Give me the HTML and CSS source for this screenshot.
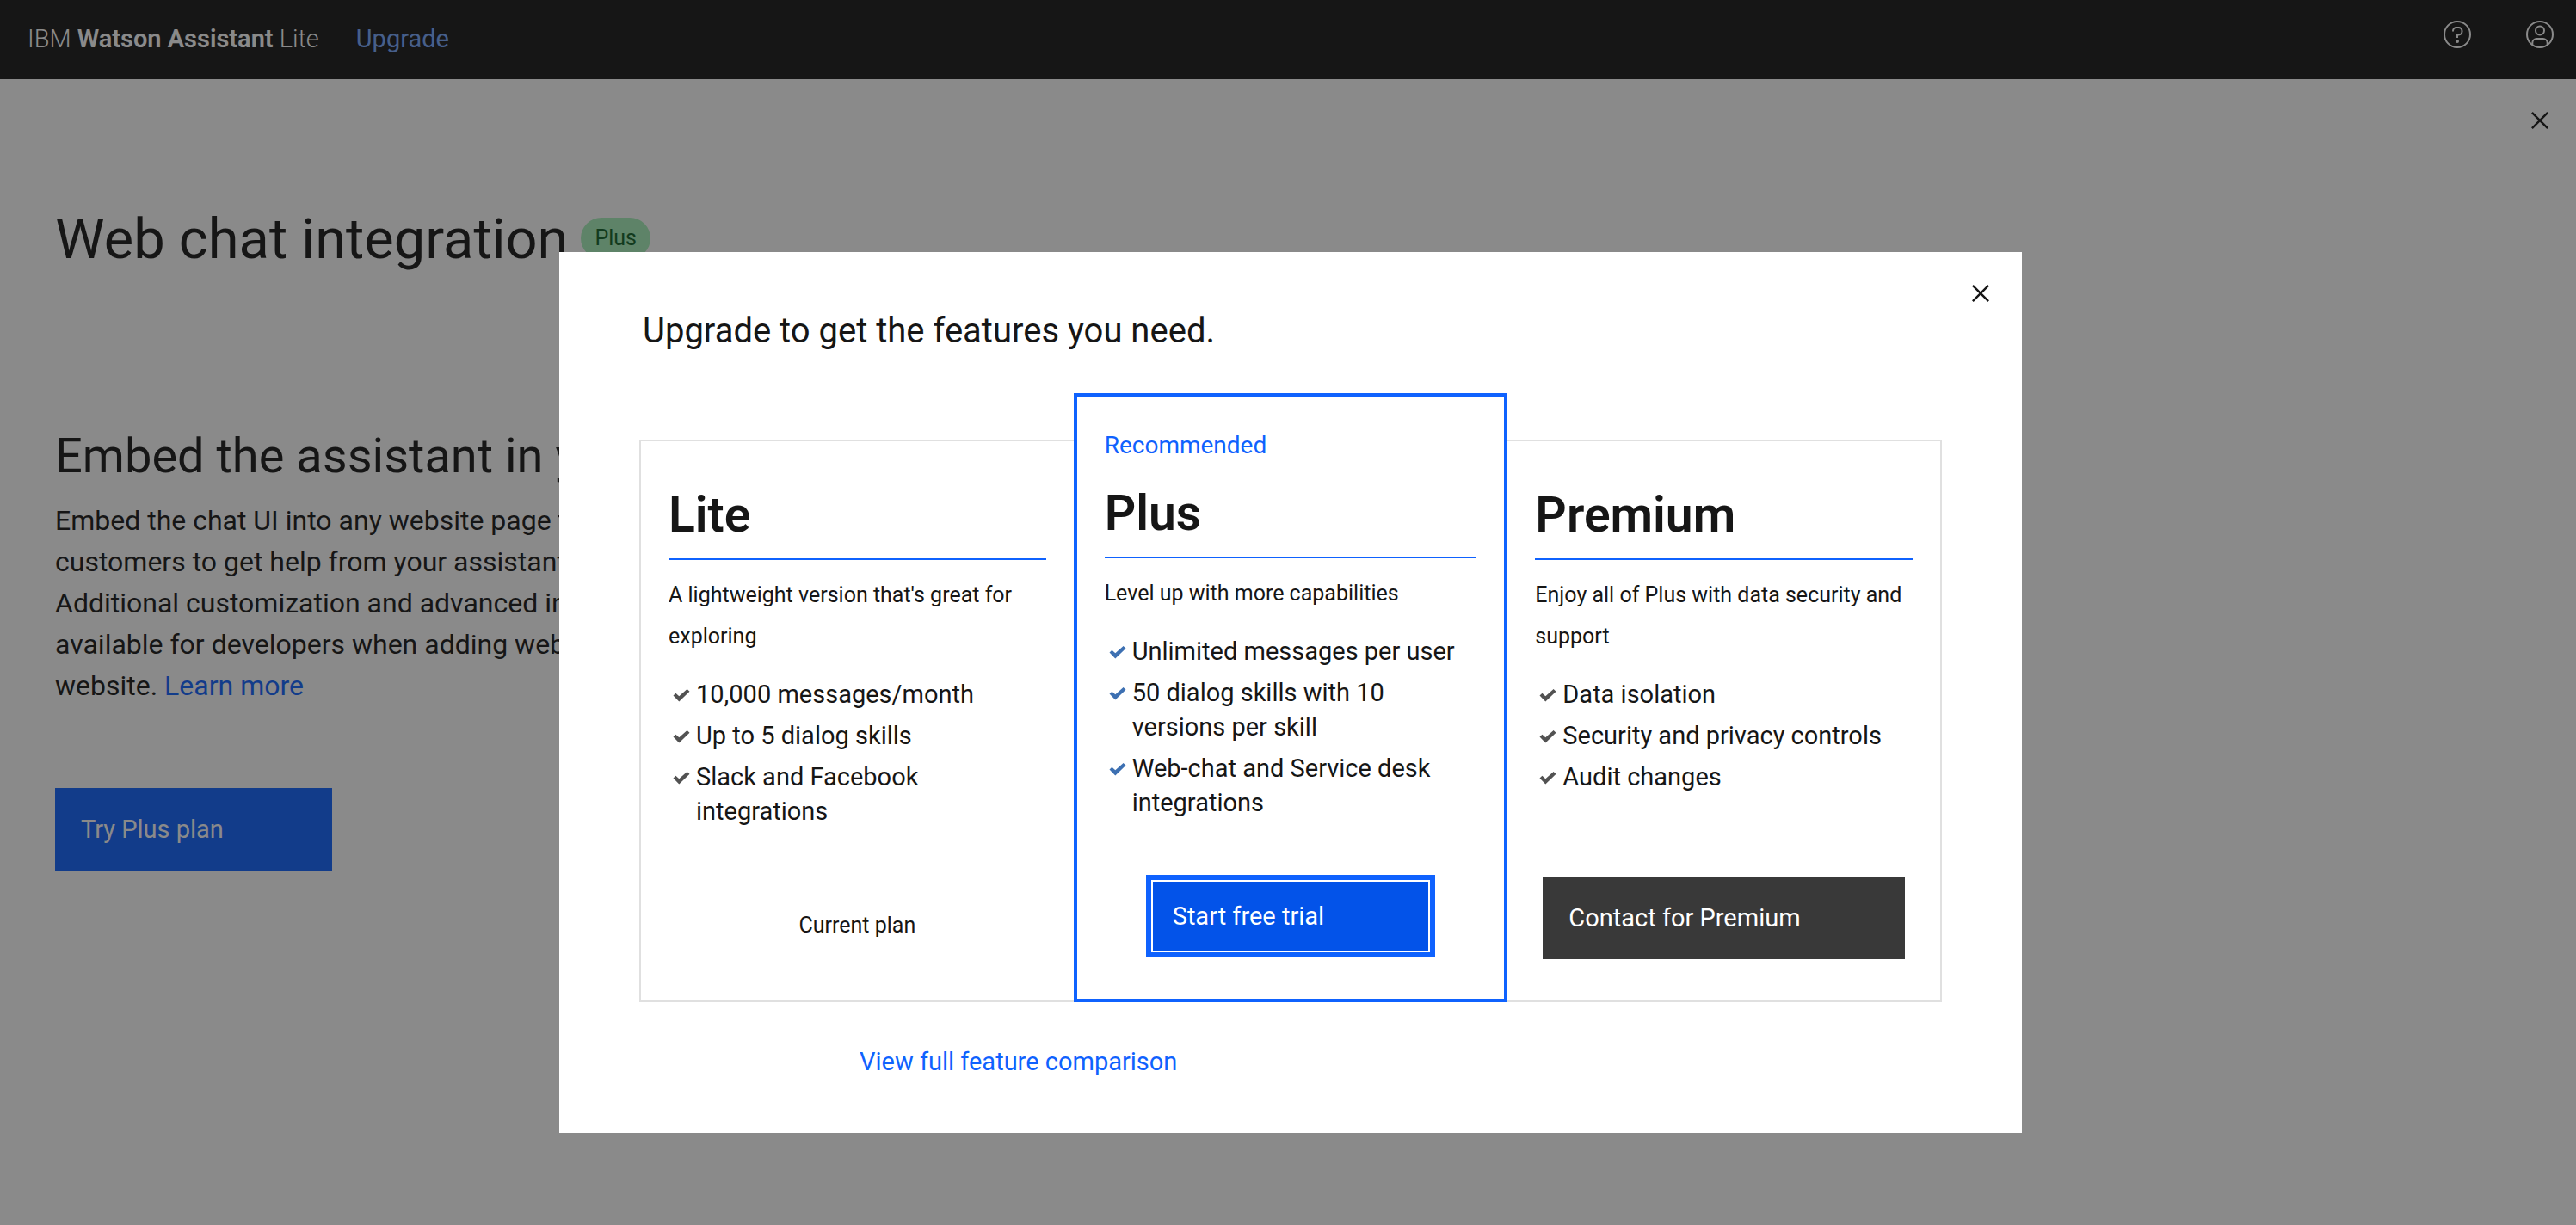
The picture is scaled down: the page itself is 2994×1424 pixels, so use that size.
FILE: index.html
```html
<!DOCTYPE html>
<html lang="en">
<head>
<meta charset="utf-8">
<meta name="viewport" content="width=device-width, initial-scale=1">
<title>IBM Watson Assistant Lite</title>
<link rel="stylesheet" href="styles.css">
</head>
<body>
<svg class="sprite" aria-hidden="true">
  <symbol id="icon-close" viewBox="0 0 32 32"><path d="M24 9.4L22.6 8 16 14.6 9.4 8 8 9.4l6.6 6.6L8 22.6 9.4 24l6.6-6.6 6.6 6.6 1.4-1.4-6.6-6.6z"/></symbol>
  <symbol id="icon-check" viewBox="0 0 20 16"><path d="M.5 8.6L3.400 5.700l3.900 3.600L16.600 1l2.900 2.800L7.300 15.500z"/></symbol>
</svg>

<header class="topbar">
  <p class="brand">IBM <strong>Watson Assistant</strong> Lite</p>
  <a class="topbar-link" href="#upgrade">Upgrade</a>
  <div class="topbar-actions">
    <button class="topbar-button" type="button" aria-label="Help">
      <svg class="icon-round" viewBox="0 0 32 32" fill="none" stroke="currentColor" stroke-width="2">
        <circle cx="16" cy="16" r="15"/>
        <path d="M11 12.5v-.5a4 4 0 0 1 4-4h2.500a4 4 0 0 1 4 4v.500a4 4 0 0 1-4 4H16V20"/>
        <circle cx="16" cy="24" r="2" fill="currentColor" stroke="none"/>
      </svg>
    </button>
    <button class="topbar-button" type="button" aria-label="Account">
      <svg class="icon-round" viewBox="0 0 32 32" fill="none" stroke="currentColor" stroke-width="2">
        <circle cx="16" cy="16" r="15"/>
        <circle cx="16" cy="11.500" r="5"/>
        <path d="M7.300 28v-2a5 5 0 0 1 5-5h7.400a5 5 0 0 1 5 5v2"/>
      </svg>
    </button>
  </div>
</header>

<main class="page">
  <div class="page-tools">
    <button class="page-close" type="button" aria-label="Close page"><svg class="icon-close"><use href="#icon-close"/></svg></button>
  </div>
  <div class="page-body">
    <div class="page-heading">
      <h1 class="page-title">Web chat integration</h1>
      <span class="tag">Plus</span>
    </div>
    <h2 class="section-title">Embed the assistant in your website</h2>
    <p class="section-text">Embed the chat UI into any website page to allow<br>
      customers to get help from your assistant.<br>
      Additional customization and advanced integration is<br>
      available for developers when adding web chat to a<br>
      website. <a class="link" href="#learn">Learn more</a></p>
    <button class="button button-primary page-button" type="button">Try Plus plan</button>
  </div>
</main>

<div class="overlay">
  <section class="modal" role="dialog" aria-modal="true" aria-labelledby="modal-title">
    <div class="modal-header">
      <h2 class="modal-title" id="modal-title">Upgrade to get the features you need.</h2>
      <button class="modal-close" type="button" aria-label="Close"><svg class="icon-close"><use href="#icon-close"/></svg></button>
    </div>

    <div class="plans">
      <article class="plan plan-first">
        <h3 class="plan-name">Lite</h3>
        <p class="plan-summary">A lightweight version that's great for exploring</p>
        <ul class="features">
          <li class="feature"><svg class="check"><use href="#icon-check"/></svg><span>10,000 messages/month</span></li>
          <li class="feature"><svg class="check"><use href="#icon-check"/></svg><span>Up to 5 dialog skills</span></li>
          <li class="feature"><svg class="check"><use href="#icon-check"/></svg><span>Slack and Facebook integrations</span></li>
        </ul>
        <div class="plan-action"><p class="current">Current plan</p></div>
      </article>

      <article class="plan plan-featured">
        <p class="recommended">Recommended</p>
        <h3 class="plan-name">Plus</h3>
        <p class="plan-summary">Level up with more capabilities</p>
        <ul class="features">
          <li class="feature"><svg class="check"><use href="#icon-check"/></svg><span>Unlimited messages per user</span></li>
          <li class="feature"><svg class="check"><use href="#icon-check"/></svg><span>50 dialog skills with 10 versions per skill</span></li>
          <li class="feature"><svg class="check"><use href="#icon-check"/></svg><span>Web-chat and Service desk integrations</span></li>
        </ul>
        <div class="plan-action"><button class="button button-focused" type="button">Start free trial</button></div>
      </article>

      <article class="plan plan-last">
        <h3 class="plan-name">Premium</h3>
        <p class="plan-summary">Enjoy all of Plus with data security and support</p>
        <ul class="features">
          <li class="feature"><svg class="check"><use href="#icon-check"/></svg><span>Data isolation</span></li>
          <li class="feature"><svg class="check"><use href="#icon-check"/></svg><span>Security and privacy controls</span></li>
          <li class="feature"><svg class="check"><use href="#icon-check"/></svg><span>Audit changes</span></li>
        </ul>
        <div class="plan-action"><button class="button button-dark" type="button">Contact for Premium</button></div>
      </article>
    </div>

    <p class="modal-footer"><a class="link" href="#compare">View full feature comparison</a></p>
  </section>
</div>
</body>
</html>
```
FILE: styles.css
```css
:root {
  --ink: #161616;
  --blue: #0f62fe;
  --line: #e0e0e0;
}

* { box-sizing: border-box; }

body {
  margin: 0;
  min-height: 100vh;
  background: #fff;
  color: var(--ink);
  font-family: Roboto, "Liberation Sans", sans-serif;
  font-size: 29px;
  line-height: 40px;
  font-weight: 400;
}

h1, h2, h3, p, ul { margin: 0; padding: 0; font-weight: 400; }

button {
  border: 0;
  padding: 0;
  background: none;
  color: inherit;
  font: inherit;
  cursor: pointer;
}

svg { display: block; fill: currentColor; }
.sprite { position: absolute; width: 0; height: 0; }
.link { color: var(--blue); text-decoration: none; }
.icon-close { width: 40px; height: 40px; }

/* Top bar */
.topbar {
  display: flex;
  align-items: center;
  height: 92px;
  padding: 0 0 2px 32px;
  background: var(--ink);
  color: #fff;
}
.brand { font-weight: 300; }
.brand strong { font-weight: 600; }
.topbar-link { margin-left: 43px; color: #78a9ff; text-decoration: none; }
.topbar-actions { display: flex; gap: 12px; margin-left: auto; align-self: flex-start; }
.topbar-button { display: grid; place-items: center; width: 84px; height: 80px; }
.icon-round { width: 32px; height: 32px; fill: none; }

/* Page behind the dialog */
.page-tools { display: flex; justify-content: flex-end; }
.page-close { display: grid; place-items: center; width: 84px; height: 96px; }
.page-body { padding: 48px 64px; }
.page-heading { display: flex; align-items: center; gap: 15px; }
.page-title { padding-top: 2px; font-size: 65px; line-height: 80px; }
.tag {
  padding: 0 16px;
  border-radius: 24px;
  background: #a7f0ba;
  color: #0e6027;
  font-size: 25px;
  line-height: 48px;
}
.section-title { margin-top: 180px; font-size: 56px; line-height: 64px; }
.section-text { margin-top: 19px; font-size: 32px; line-height: 48px; }

.button { height: 96px; padding: 0 30px; color: #fff; text-align: left; }
.button-primary { background: var(--blue); }
.page-button { width: 322px; margin-top: 95px; }

/* Dialog */
.overlay {
  position: fixed;
  inset: 0;
  overflow: auto;
  padding: 293px 0 0 6px;
  background: rgba(22, 22, 22, 0.5);
}
.modal { width: 100%; max-width: 1700px; margin: 0 auto; padding: 0 93px 63px; background: #fff; }
.modal-header { display: flex; justify-content: space-between; align-items: flex-start; margin-right: -93px; padding-left: 4px; }
.modal-title { padding: 64px 0 44px; font-size: 40px; line-height: 56px; }
.modal-close { display: grid; place-items: center; width: 96px; height: 96px; }
.modal-footer { margin-top: 49px; padding-left: 256px; }

/* Plans */
.plans { display: grid; grid-template-columns: repeat(3, 1fr); }
.plan {
  display: flex;
  flex-direction: column;
  margin-top: 54px;
  padding: 54px 32px 48px;
  border: 2px solid var(--line);
}
.plan-first { border-right: 0; }
.plan-last { border-left: 0; }
.plan-featured { margin-top: 0; padding-top: 37px; border: 4px solid var(--blue); }
.recommended { margin-bottom: 27px; color: var(--blue); font-size: 28px; }
.plan-name {
  padding-bottom: 18px;
  border-bottom: 2px solid var(--blue);
  font-size: 57px;
  line-height: 64px;
  font-weight: 600;
}
.plan-summary { margin-top: 17px; font-size: 25px; line-height: 48px; }
.features { display: grid; gap: 8px; margin-top: 23px; padding-right: 16px; list-style: none; }
.feature { display: flex; gap: 7px; padding-left: 5px; }
.check { flex: none; width: 20px; height: 16px; margin-top: 13px; color: #525252; }
.plan-featured .check { color: #3d70b2; }
.plan-action { display: grid; margin-top: auto; padding: 0 9px; }
.plan-featured .plan-action { margin-top: 64px; padding: 0 48px; }
.current { padding: 33px 0 15px; font-size: 25px; line-height: 48px; text-align: center; }
.button-focused {
  border: 6px solid var(--blue);
  padding: 0 25px;
  background: #0353e9;
  box-shadow: inset 0 0 0 2px #fff;
}
.button-dark { background: #393939; }
```
